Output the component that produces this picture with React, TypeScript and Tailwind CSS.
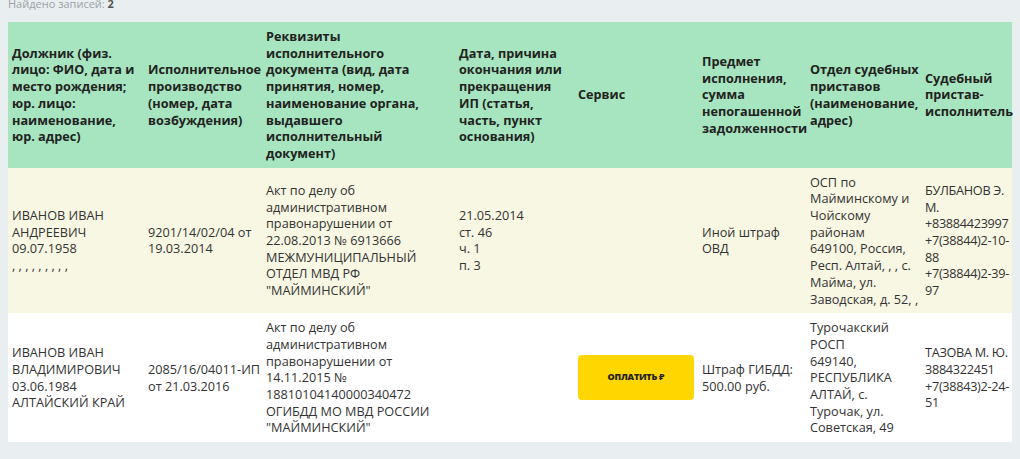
import React from "react";

const headers = [
  "Должник (физ. лицо: ФИО, дата и место рождения; юр. лицо: наименование, юр. адрес)",
  "Исполнительное производство (номер, дата возбуждения)",
  "Реквизиты исполнительного документа (вид, дата принятия, номер, наименование органа, выдавшего исполнительный документ)",
  "Дата, причина окончания или прекращения ИП (статья, часть, пункт основания)",
  "Сервис",
  "Предмет исполнения, сумма непогашенной задолженности",
  "Отдел судебных приставов (наименование, адрес)",
  "Судебный пристав-исполнитель",
];

const widths = [136, 118, 193, 119, 124, 108, 115, 91];

// header cells whose text wraps a little earlier in the original
const thPad = ["pr-1", "pr-0", "pr-1", "pr-0", "pr-0", "pr-0", "pr-0", "pr-0"];

type Row = {
  debtor: string[];
  proceeding: string[];
  doc: string[];
  end: string[];
  pay: boolean;
  subject: string[];
  dept: string[];
  bailiff: string[];
};

const rows: Row[] = [
  {
    debtor: ["ИВАНОВ ИВАН АНДРЕЕВИЧ", "09.07.1958", ", , , , , , , , ,"],
    proceeding: ["9201/14/02/04 от 19.03.2014"],
    doc: [
      "Акт по делу об административном правонарушении от 22.08.2013 № 6913666 МЕЖМУНИЦИПАЛЬНЫЙ ОТДЕЛ МВД РФ \"МАЙМИНСКИЙ\"",
    ],
    end: ["21.05.2014", "ст. 46", "ч. 1", "п. 3"],
    pay: false,
    subject: ["Иной штраф ОВД"],
    dept: ["ОСП по Майминскому и Чойскому районам", "649100, Россия, Респ. Алтай, , , с. Майма, ул. Заводская, д. 52, ,"],
    bailiff: ["БУЛБАНОВ Э. М.", "+83884423997", "+7(38844)2-10-88", "+7(38844)2-39-97"],
  },
  {
    debtor: ["ИВАНОВ ИВАН ВЛАДИМИРОВИЧ", "03.06.1984", "АЛТАЙСКИЙ КРАЙ"],
    proceeding: ["2085/16/04011-ИП от 21.03.2016"],
    doc: [
      "Акт по делу об административном правонарушении от 14.11.2015 № 18810104140000340472 ОГИБДД МО МВД РОССИИ \"МАЙМИНСКИЙ\"",
    ],
    end: [],
    pay: true,
    subject: ["Штраф ГИБДД: 500.00 руб."],
    dept: ["Турочакский РОСП", "649140, РЕСПУБЛИКА АЛТАЙ, с. Турочак, ул. Советская, 49"],
    bailiff: ["ТАЗОВА М. Ю.", "3884322451", "+7(38843)2-24-51"],
  },
];

function Lines({ items }: { items: string[] }) {
  return (
    <>
      {items.map((t, i) => (
        <div key={i}>{t}</div>
      ))}
    </>
  );
}

const cell = "pl-1 pr-0 py-[6px] align-middle text-[#333]";

export default function App() {
  return (
    <div
      className="min-h-[459px] w-[1020px] overflow-hidden bg-[#e9eef0] pl-2 pr-2"
      style={{ fontFamily: '"Open Sans", "Noto Sans", sans-serif' }}
    >
      <div className="-mt-[4px] h-[26px] text-[11px] leading-[16px] text-[#9aa3a8]">
        Найдено записей: <b className="text-[#555]">2</b>
      </div>

      <table className="w-[1004px] table-fixed border-collapse text-[12.7px] leading-[16.7px]">
        <colgroup>
          {widths.map((w, i) => (
            <col key={i} style={{ width: w }} />
          ))}
        </colgroup>
        <thead>
          <tr className="bg-[#a6e5bf]">
            {headers.map((h, i) => (
              <th
                key={i}
                className={"pl-1 py-[6px] text-left align-middle font-bold text-[#222] " + thPad[i]}
              >
                {h}
              </th>
            ))}
          </tr>
        </thead>
        <tbody>
          {rows.map((r, i) => (
            <tr key={i} className={i === 0 ? "bg-[#f8f7e4]" : "bg-white"}>
              <td className={cell}>
                <Lines items={r.debtor} />
              </td>
              <td className={cell}>
                <Lines items={r.proceeding} />
              </td>
              <td className={cell}>
                <Lines items={r.doc} />
              </td>
              <td className={cell}>
                <Lines items={r.end} />
              </td>
              <td className={cell}>
                {r.pay && (
                  <button className="flex h-[45px] w-[116px] items-center justify-center rounded-[4px] bg-[#ffd600] text-[9px] font-extrabold tracking-tight text-[#222]">
                    ОПЛАТИТЬ ₽
                  </button>
                )}
              </td>
              <td className={cell}>
                <Lines items={r.subject} />
              </td>
              <td className={cell}>
                <Lines items={r.dept} />
              </td>
              <td className={cell + " tracking-[-0.3px]"}>
                <Lines items={r.bailiff} />
              </td>
            </tr>
          ))}
        </tbody>
      </table>
    </div>
  );
}
